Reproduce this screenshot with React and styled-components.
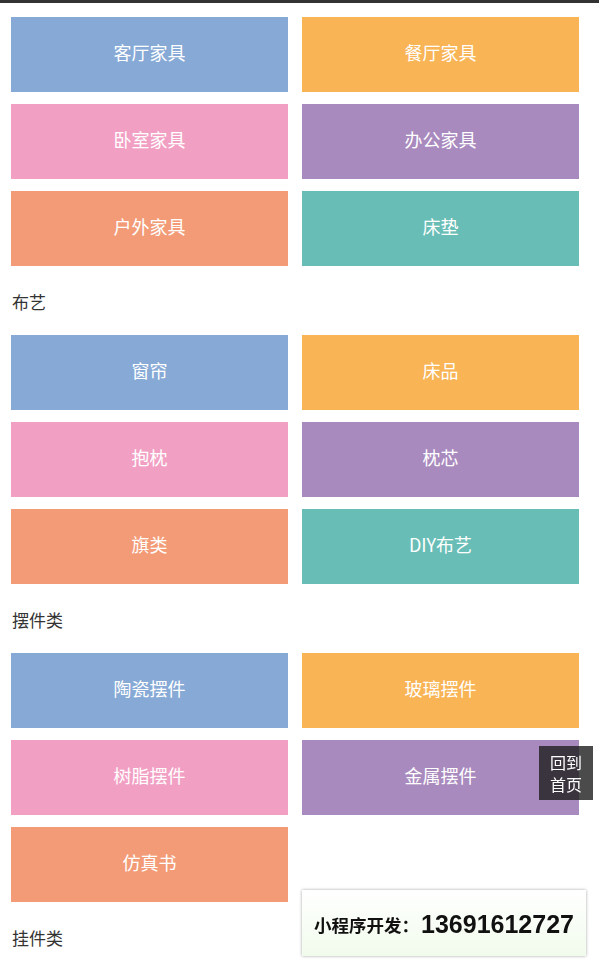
import styled, { createGlobalStyle } from 'styled-components';

const GlobalStyle = createGlobalStyle`
    body {
        margin: 0;
        background: #fff;
        font-family: "Noto Sans CJK SC", "Noto Sans", sans-serif;
    }
`;

const Page = styled.div`
    border-top: 3px solid #333;
    padding: 14px 20px 0 11px;
`;

const Grid = styled.div`
    display: grid;
    grid-template-columns: 1fr 1fr;
    column-gap: 14px;
    row-gap: 12px;
`;

const Tile = styled.div`
    height: 75px;
    box-sizing: border-box;
    padding-bottom: 5px;
    display: flex;
    align-items: center;
    justify-content: center;
    background-color: ${(p) => p.$color};
    color: #fff;
    font-size: 18px;
    line-height: 1;
`;

const SectionTitle = styled.div`
    padding: 25px 1px 22px;
    line-height: 22px;
    font-size: 17px;
    color: #333;
`;

const BackTop = styled.div`
    position: fixed;
    left: 539px;
    top: 746px;
    width: 54px;
    height: 54px;
    background: rgba(30, 30, 30, 0.8);
    color: #fff;
    font-size: 16px;
    line-height: 22px;
    display: flex;
    flex-direction: column;
    align-items: center;
    justify-content: center;
`;

const Contact = styled.div`
    position: fixed;
    left: 302px;
    top: 890px;
    width: 284px;
    height: 66px;
    box-sizing: border-box;
    background: linear-gradient(#ffffff, #f1fbec);
    box-shadow: 0 0 3px rgba(0, 0, 0, 0.35);
    display: flex;
    align-items: center;
    justify-content: center;
    color: #111;
    font-weight: bold;
    padding-top: 2px;

    .label {
        font-size: 17.5px;
        font-family: "Noto Sans CJK SC", sans-serif;
    }
    .phone {
        font-size: 25px;
        font-family: "Liberation Sans", Arial, sans-serif;
        margin-left: 2px;
    }
`;

const colors = ['#86a9d6', '#f9b455', '#f29fc4', '#a98abe', '#f39b77', '#68bdb6'];

const sections = [
    { title: null, items: ['客厅家具', '餐厅家具', '卧室家具', '办公家具', '户外家具', '床垫'] },
    { title: '布艺', items: ['窗帘', '床品', '抱枕', '枕芯', '旗类', 'DIY布艺'] },
    { title: '摆件类', items: ['陶瓷摆件', '玻璃摆件', '树脂摆件', '金属摆件', '仿真书'] },
    { title: '挂件类', items: [] },
];

export default function App() {
    return (
        <>
            <GlobalStyle />
            <Page>
                {sections.map((section, i) => (
                    <div key={i}>
                        {section.title && <SectionTitle>{section.title}</SectionTitle>}
                        {section.items.length > 0 && (
                            <Grid>
                                {section.items.map((item, j) => (
                                    <Tile key={j} $color={colors[j % colors.length]}>{item}</Tile>
                                ))}
                            </Grid>
                        )}
                    </div>
                ))}
            </Page>
            <BackTop>
                <span>回到</span>
                <span>首页</span>
            </BackTop>
            <Contact>
                <span className="label">小程序开发：</span>
                <span className="phone">13691612727</span>
            </Contact>
        </>
    );
}
